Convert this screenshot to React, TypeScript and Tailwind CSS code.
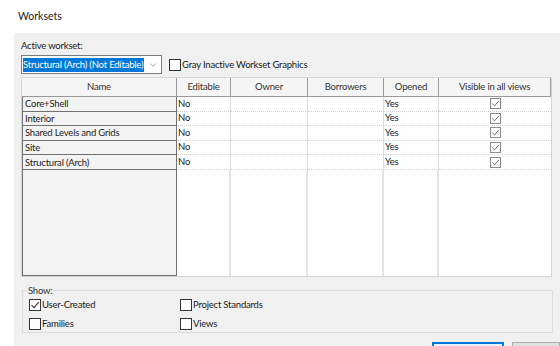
import { ChevronDown } from "lucide-react";

const rows = ["Core+Shell", "Interior", "Shared Levels and Grids", "Site", "Structural (Arch)"];
const headers = ["Name", "Editable", "Owner", "Borrowers", "Opened", "Visible in all views"];

function CheckMark({ className }: { className?: string }) {
    return (
        <svg viewBox="0 0 10 10" className={className} fill="none">
            <path d="M1.5 5.2 L4 7.6 L8.6 2.2" stroke="currentColor" strokeWidth="1.1" />
        </svg>
    );
}

function Box({ checked, label, width }: { checked?: boolean; label: string; width?: string }) {
    return (
        <div className={`flex items-center h-[12px] ${width ?? ""}`}>
            <div className="w-[12px] h-[12px] shrink-0 border border-[#333] bg-white flex items-center justify-center text-[#333]">
                {checked && <CheckMark className="w-[10px] h-[10px]" />}
            </div>
            <span className="ml-[1px] leading-[12px] whitespace-nowrap">{label}</span>
        </div>
    );
}

export default function App() {
    const cell = "border-r border-r-[#dcdcdc] border-b border-b-[#cfcfcf] [border-bottom-style:dotted]";
    return (
        <div
            className="w-[560px] h-[346px] bg-white flex flex-col overflow-hidden text-[9.5px] tracking-[-0.2px] text-[#1a1a1a]"
            style={{ fontFamily: 'Lato, "Noto Sans", sans-serif' }}
        >
            <div className="h-[33px] shrink-0 pl-[18px] flex items-center text-[10.5px] tracking-normal text-[#222]">Worksets</div>

            <div className="shrink-0 ml-[14px] bg-[#f0f0f0] pl-[7px] pr-[8px] pt-[5px] pb-[20px] flex flex-col">
                <div className="h-[15px] leading-[15px]">Active workset:</div>

                <div className="mt-[2px] flex items-center h-[19px]">
                    <div className="w-[141px] h-[19px] border border-[#7a7a7a] bg-white flex items-center pl-[1px]">
                        <span className="bg-[#0078d7] text-white leading-[14px] h-[14px] whitespace-nowrap pr-[1px]">
                            Structural (Arch) (Not Editable)
                        </span>
                        <ChevronDown className="ml-auto mr-[3px] w-[10px] h-[10px] text-[#777]" strokeWidth={1.5} />
                    </div>
                    <div className="ml-[7px]">
                        <Box label="Gray Inactive Workset Graphics" />
                    </div>
                </div>

                <div className="mt-[3px] w-[531px] h-[200px] border border-[#d4d4d4] bg-white grid grid-cols-[155px_54px_77px_76px_55px_1fr] grid-rows-[19px_repeat(5,14.6px)_1fr]">
                    {headers.map((h) => (
                        <div
                            key={h}
                            className="bg-[#f5f5f5] border-r border-b border-[#9a9a9a] flex items-center justify-center text-[#333]"
                        >
                            {h}
                        </div>
                    ))}
                    {rows.map((r) => (
                        <div key={r} className="contents">
                            <div className="bg-[#f3f3f3] border-r border-b border-l border-[#707070] pl-[2px] leading-[13px] flex items-center whitespace-nowrap">
                                {r}
                            </div>
                            <div className={`${cell} pl-[1px] flex items-center`}>No</div>
                            <div className={cell} />
                            <div className={cell} />
                            <div className={`${cell} pl-[1px] flex items-center`}>Yes</div>
                            <div className="border-b border-b-[#cfcfcf] [border-bottom-style:dotted] flex items-center justify-center">
                                <div className="w-[11px] h-[11px] border border-[#8a8a8a] text-[#666] flex items-center justify-center">
                                    <CheckMark className="w-[9px] h-[9px]" />
                                </div>
                            </div>
                        </div>
                    ))}
                    <div className="bg-[#f3f3f3] border-l border-r border-b border-[#707070]" />
                    <div className="border-r-2 border-[#e4e4e4]" />
                    <div className="border-r-2 border-[#e4e4e4]" />
                    <div className="border-r-2 border-[#e4e4e4]" />
                    <div className="border-r-2 border-[#e4e4e4]" />
                    <div />
                </div>

                <fieldset className="mt-[8px] w-[531px] h-[48px] border border-[#dcdcdc] px-[6px] ml-[1px]">
                    <legend className="text-[#333] ml-[-1px] leading-[11px]">Show:</legend>
                    <div className="flex mt-[3px]">
                        <Box checked label="User-Created" width="w-[151px]" />
                        <Box label="Project Standards" />
                    </div>
                    <div className="flex mt-[7px]">
                        <Box label="Families" width="w-[151px]" />
                        <Box label="Views" />
                    </div>
                </fieldset>

                <div className="mt-[9px] flex justify-end gap-[8px] -mr-[8px]">
                    <div className="w-[72px] h-[22px] border-2 border-[#0078d7] bg-[#e5f1fb]" />
                    <div className="w-[48px] h-[22px] border border-[#adadad] bg-[#e1e1e1]" />
                </div>
            </div>
        </div>
    );
}
